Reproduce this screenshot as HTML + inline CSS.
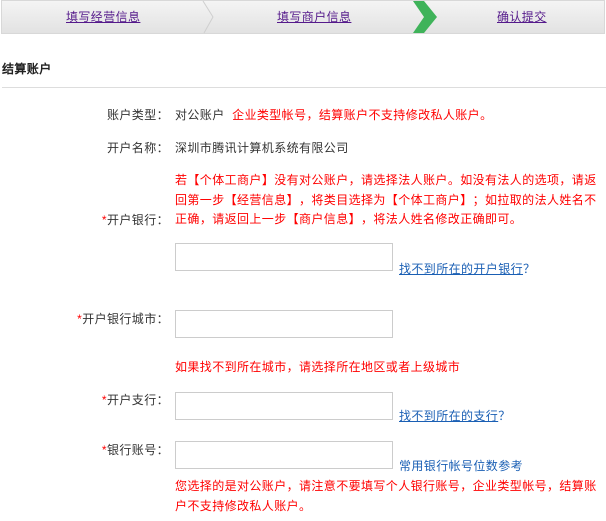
<!DOCTYPE html>
<html><head><meta charset="utf-8"><style>
body{margin:0;width:606px;height:521px;background:#fff;font-family:"Liberation Sans","WenQuanYi Zen Hei",sans-serif;font-size:12px;letter-spacing:0.4px;color:#333;position:relative;overflow:hidden}
.a{position:absolute;white-space:nowrap;line-height:14px}
.l{position:absolute;right:437px;text-align:right;white-space:nowrap;line-height:14px}
.r{color:#f00}
.s{color:#f00}
.in{position:absolute;left:175px;width:216px;height:26px;border:1px solid #ccc;background:#fff}
.lk{position:absolute;color:#1a5fb4;text-decoration:underline;white-space:nowrap;line-height:14px}
.bar{position:absolute;left:1px;top:0;width:604px;height:34px;background:linear-gradient(#f4f4f4,#e2e2e2);border:1px solid #d8d8d8;box-sizing:border-box}
.st{position:absolute;top:10px;color:#551a8b;text-decoration:underline;line-height:14px}
.p{display:inline-block;width:12.4px;text-align:left}
.q{display:inline-block;width:12.4px;text-align:right}
</style></head><body>
<div class="bar"></div>
<svg style="position:absolute;left:0;top:0" width="606" height="34">
<polyline points="203,1 213,17 204,33" fill="none" stroke="#cfcfcf" stroke-width="1"/>
<polygon points="413,1 424,1 437,17 424,33 413,33 424,17" fill="#3fb35a"/>
</svg>
<div class="st" style="left:66px">填写经营信息</div>
<div class="st" style="left:277px">填写商户信息</div>
<div class="st" style="left:497px">确认提交</div>
<div class="a" style="left:2px;top:62px;font-weight:bold;color:#222">结算账户</div>
<div style="position:absolute;left:2px;top:87px;width:604px;height:1px;background:#ddd"></div>

<div class="l" style="top:108px">账户类型<span class="p">：</span></div>
<div class="a" style="left:175px;top:108px">对公账户 <span class="r">&nbsp;企业类型帐号<span class="p">，</span>结算账户不支持修改私人账户<span class="p">。</span></span></div>
<div class="l" style="top:141px">开户名称<span class="p">：</span></div>
<div class="a" style="left:175px;top:141px">深圳市腾讯计算机系统有限公司</div>

<div class="a r" style="left:175px;line-height:19.5px;top:171px">若<span class="q">【</span>个体工商户<span class="p">】</span>没有对公账户<span class="p">，</span>请选择法人账户<span class="p">。</span>如没有法人的选项<span class="p">，</span>请返<br>回第一步<span class="q">【</span>经营信息<span class="p">】</span><span class="p">，</span>将类目选择为<span class="q">【</span>个体工商户<span class="p">】</span><span class="p">；</span>如拉取的法人姓名不<br>正确<span class="p">，</span>请返回上一步<span class="q">【</span>商户信息<span class="p">】</span><span class="p">，</span>将法人姓名修改正确即可<span class="p">。</span></div>
<div class="l" style="top:213px"><span class="s">*</span>开户银行<span class="p">：</span></div>
<div class="in" style="top:243px"></div>
<div class="lk" style="left:399px;top:262px">找不到所在的开户银行<span class="p">？</span></div>

<div class="l" style="top:312px"><span class="s">*</span>开户银行城市<span class="p">：</span></div>
<div class="in" style="top:310px"></div>
<div class="a r" style="left:175px;top:360px">如果找不到所在城市<span class="p">，</span>请选择所在地区或者上级城市</div>

<div class="l" style="top:393px"><span class="s">*</span>开户支行<span class="p">：</span></div>
<div class="in" style="top:392px"></div>
<div class="lk" style="left:399px;top:409px">找不到所在的支行<span class="p">？</span></div>

<div class="l" style="top:443px"><span class="s">*</span>银行账号<span class="p">：</span></div>
<div class="in" style="top:441px"></div>
<div class="a" style="left:399px;top:459px;color:#1a5fb4">常用银行帐号位数参考</div>
<div class="a r" style="left:175px;top:476px;line-height:20px">您选择的是对公账户<span class="p">，</span>请注意不要填写个人银行账号<span class="p">，</span>企业类型帐号<span class="p">，</span>结算账<br>户不支持修改私人账户<span class="p">。</span></div>
</body></html>
